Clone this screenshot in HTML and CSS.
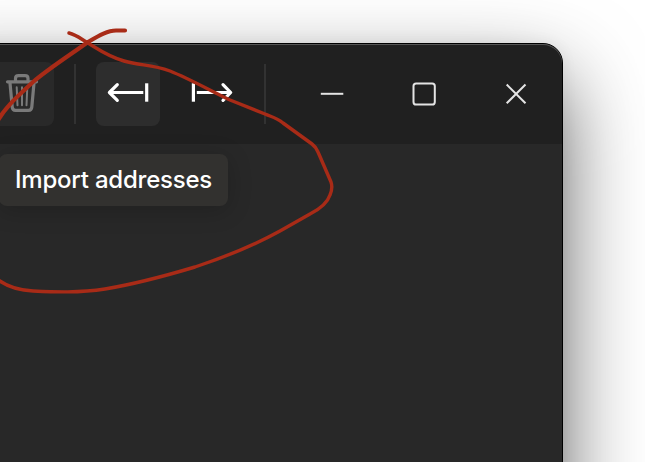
FILE: index.html
```html
<!DOCTYPE html>
<html lang="en">
<head>
<meta charset="utf-8">
<title>Addresses</title>
<link rel="stylesheet" href="styles.css">
</head>
<body>
<main class="window">
  <header class="toolbar">
    <button class="tool tool-dim" aria-label="Delete">
      <svg viewBox="0 0 64 64" fill="none" stroke="#7a7a7a" stroke-width="3.2" stroke-linecap="round" stroke-linejoin="round">
        <path d="M17.5 19.8H46.5"/>
        <path d="M25.5 19V16.5Q25.5 13.7 28.5 13.7H35Q38 13.7 38 16.5V19"/>
        <path d="M20 21L22.2 45Q22.5 48.3 25.5 48.3H38.5Q41.5 48.3 41.8 45L44 21"/>
        <path stroke-width="2" d="M26.7 25.3L27.5 43.2M32 25.3V43.2M37.3 25.3L36.5 43.2"/>
      </svg>
    </button>
    <span class="divider"></span>
    <button class="tool tool-active" aria-label="Import addresses">
      <svg viewBox="0 0 64 64" fill="none" stroke="#fff" stroke-width="3.2">
        <path d="M14 30.5H47.3"/>
        <path stroke-linecap="round" stroke-linejoin="round" d="M21.3 22.6L13.4 30.5L21.3 38.4"/>
        <path d="M50.7 21.3V39.7"/>
      </svg>
    </button>
    <button class="tool" aria-label="Export addresses">
      <svg viewBox="0 0 64 64" fill="none" stroke="#fff" stroke-width="3.2">
        <path d="M16.8 30.5H50"/>
        <path stroke-linecap="round" stroke-linejoin="round" d="M43 22.6L50.7 30.5L43 38.4"/>
        <path d="M13.4 21.3V39.7"/>
      </svg>
    </button>
    <span class="divider"></span>
    <nav class="controls">
      <button class="control" aria-label="Minimize">
        <svg viewBox="0 0 32 32"><path d="M4.8 15.8H27.3"/></svg>
      </button>
      <button class="control" aria-label="Maximize">
        <svg viewBox="0 0 32 32"><rect x="5.5" y="5.5" width="21.3" height="21" rx="2.6"/></svg>
      </button>
      <button class="control" aria-label="Close">
        <svg viewBox="0 0 32 32"><path d="M6.7 6.5L25.5 25.3M25.5 6.5L6.7 25.3"/></svg>
      </button>
    </nav>
  </header>
  <section class="content">
    <div class="tooltip">Import addresses</div>
  </section>
</main>
<svg class="scribble" viewBox="0 0 645 462" fill="none" stroke="#a82b17" stroke-linecap="round" stroke-linejoin="round">
  <path stroke-width="4.2" d="M-3 122C6 106 18 96 33 82C48 69 70 55 88 42C100 35 108 30.5 116 30.5H125"/>
  <path stroke-width="3.4" d="M69 33C77 35 81 39 88 43C98 49 107 56 124 61C141 66 151 64 170 71C190 79 213 92 230 100L265 114C272 117 277 118 283 123L312 144Q316 147 318 152L331 182Q333 188 330 195C327 204 318 210 310 214L280 231C251 247 225 257 195 267C165 276 135 284 105 289C79 293 55 292 33 291Q11 290-3 279"/>
</svg>
</body>
</html>
```

FILE: styles.css
```css
* {
  box-sizing: border-box;
}

body {
  margin: 0;
  height: 462px;
  overflow: hidden;
  background: #fff;
  font-family: Inter, "Liberation Sans", sans-serif;
}

.window {
  width: 663px;
  height: 700px;
  margin: 43px 0 0 -100px;
  border: 1px solid #000;
  border-radius: 20px;
  background: #282828;
  box-shadow: 0 36px 84px rgba(0, 0, 0, 0.62), 0 0 16px rgba(0, 0, 0, 0.06);
}

.toolbar {
  display: flex;
  align-items: center;
  gap: 20px;
  height: 100px;
  padding-left: 89px;
  border-radius: 19px 19px 0 0;
  background: #202020;
  box-shadow: inset 0 1px 0 #555;
}

button {
  padding: 0;
  border: 0;
  background: none;
}

.tool {
  width: 64px;
  height: 64px;
  border-radius: 8px;
}

.tool svg {
  display: block;
  width: 64px;
  height: 64px;
}

.tool-dim {
  background: #292929;
}

.tool-active {
  background: #2d2d2d;
}

.divider {
  width: 2px;
  height: 60px;
  background: #323232;
}

.controls {
  display: flex;
}

.control {
  display: grid;
  place-items: center;
  width: 92px;
  height: 64px;
}

.control svg {
  width: 32px;
  height: 32px;
  fill: none;
  stroke: #e4e4e4;
  stroke-width: 2;
}

.content {
  padding: 10px 0 0 98px;
}

.tooltip {
  width: 229px;
  height: 52px;
  padding-left: 16px;
  border-radius: 8px;
  background: #32312f;
  box-shadow: 0 4px 24px rgba(0, 0, 0, 0.2);
  color: #fff;
  font-size: 24px;
  font-weight: 450;
  line-height: 51px;
  letter-spacing: -0.22px;
  white-space: nowrap;
}

.scribble {
  position: absolute;
  inset: 0;
  width: 645px;
  height: 462px;
  pointer-events: none;
}
```
